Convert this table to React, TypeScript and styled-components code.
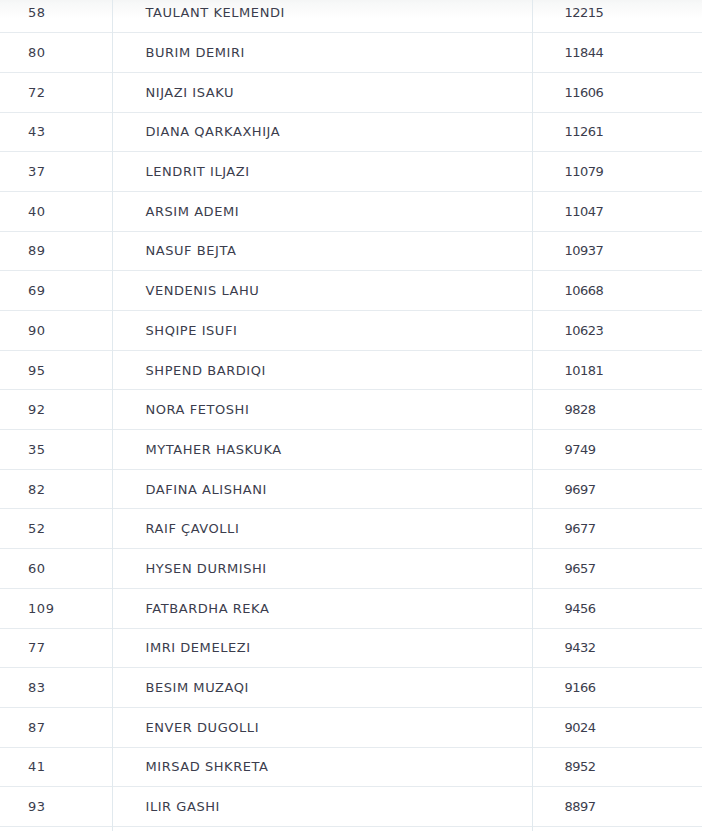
import styled, { createGlobalStyle } from "styled-components"

const GlobalStyle = createGlobalStyle`
    html, body {
        margin: 0;
        padding: 0;
        background: #ffffff;
        overflow: hidden;
    }
`

const Page = styled.div`
    width: 702px;
    height: 831px;
    overflow: hidden;
    font-family: "DejaVu Sans", "Liberation Sans", sans-serif;
`

const Table = styled.table`
    width: 100%;
    margin-top: -7px;
    border-collapse: collapse;
    table-layout: fixed;
`

const Row = styled.tr<{ $first?: boolean }>`
    height: 39.7px;
    border-bottom: 1px solid #e6ebef;
    background: ${p => p.$first
        ? "linear-gradient(to bottom, #eef0f1 0px, #f7f8f8 10px, #ffffff 26px)"
        : "#ffffff"};
`

const Cell = styled.td<{ $pad: number; $width?: number; $last?: boolean }>`
    box-sizing: border-box;
    width: ${p => p.$width ? `${p.$width}px` : "auto"};
    padding: 0 0 0 ${p => p.$pad}px;
    border-right: ${p => p.$last ? "none" : "1px solid #e1e9ee"};
    font-size: 13px;
    letter-spacing: 0.55px;
    color: #3b3d4d;
    white-space: nowrap;
    vertical-align: middle;
`

const Score = styled.span`
    letter-spacing: -0.5px;
`

interface IEntry {
    id: number;
    name: string;
    points: number;
}

const entries: IEntry[] = [
    { id: 58, name: "TAULANT KELMENDI", points: 12215 },
    { id: 80, name: "BURIM DEMIRI", points: 11844 },
    { id: 72, name: "NIJAZI ISAKU", points: 11606 },
    { id: 43, name: "DIANA QARKAXHIJA", points: 11261 },
    { id: 37, name: "LENDRIT ILJAZI", points: 11079 },
    { id: 40, name: "ARSIM ADEMI", points: 11047 },
    { id: 89, name: "NASUF BEJTA", points: 10937 },
    { id: 69, name: "VENDENIS LAHU", points: 10668 },
    { id: 90, name: "SHQIPE ISUFI", points: 10623 },
    { id: 95, name: "SHPEND BARDIQI", points: 10181 },
    { id: 92, name: "NORA FETOSHI", points: 9828 },
    { id: 35, name: "MYTAHER HASKUKA", points: 9749 },
    { id: 82, name: "DAFINA ALISHANI", points: 9697 },
    { id: 52, name: "RAIF ÇAVOLLI", points: 9677 },
    { id: 60, name: "HYSEN DURMISHI", points: 9657 },
    { id: 109, name: "FATBARDHA REKA", points: 9456 },
    { id: 77, name: "IMRI DEMELEZI", points: 9432 },
    { id: 83, name: "BESIM MUZAQI", points: 9166 },
    { id: 87, name: "ENVER DUGOLLI", points: 9024 },
    { id: 41, name: "MIRSAD SHKRETA", points: 8952 },
    { id: 93, name: "ILIR GASHI", points: 8897 },
    { id: 101, name: "", points: 0 },
]

const App = () => {
    return (
        <Page>
            <GlobalStyle />
            <Table>
                <tbody>
                    {entries.map((entry, index) => (
                        <Row key={index} $first={index === 0}>
                            <Cell $pad={28} $width={112}>{entry.name ? entry.id : ""}</Cell>
                            <Cell $pad={33} $width={420}>{entry.name}</Cell>
                            <Cell $pad={32} $last>
                                <Score>{entry.name ? entry.points : ""}</Score>
                            </Cell>
                        </Row>
                    ))}
                </tbody>
            </Table>
        </Page>
    )
}

export default App
